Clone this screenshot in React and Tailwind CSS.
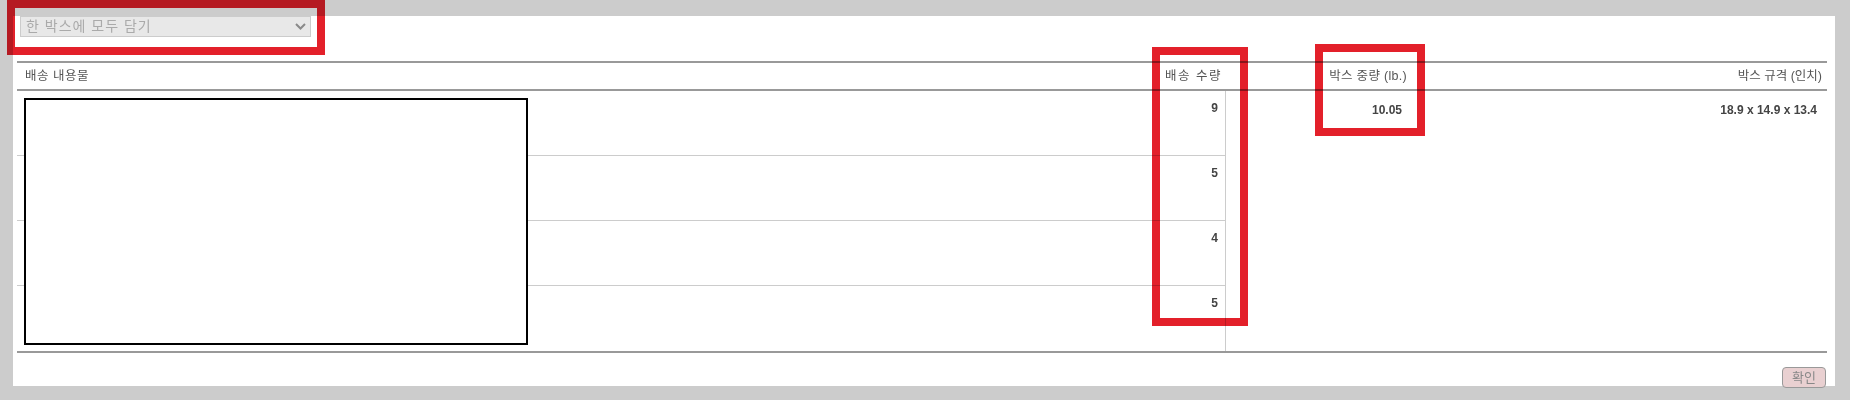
const rows = [9, 5, 4, 5]

const Chevron = () => (
  <svg width="11" height="7" viewBox="0 0 11 7" fill="none">
    <polyline points="1,1 5.5,5.5 10,1" stroke="#8a8a8a" strokeWidth="2" />
  </svg>
)

const Mark = ({ className }) => (
  <div className={`absolute border-[8px] border-[#e3202a] mix-blend-multiply pointer-events-none ${className}`} />
)

const App = () => {
  return (
    <div className="relative w-[1850px] h-[400px] overflow-hidden bg-[#cccccc] pt-[15px] pl-[13px] font-['Liberation_Sans','Noto_Sans_CJK_KR',sans-serif]">
      <div className="w-[1822px] h-[370px] bg-white">
        {/* select */}
        <div className="ml-[7px] mt-[1px] w-[291px] h-[21px] border border-[#cccccc] bg-[#e8e8e8] flex items-center justify-between pl-[5px] pr-[4px] text-[14px] text-[#aaaaaa]">
          <span className="tracking-[1px]">한 박스에 모두 담기</span>
          <Chevron />
        </div>

        {/* table */}
        <div className="ml-[4px] mt-[24px] w-[1810px] border-t-2 border-[#999999]">
          <div className="flex h-[28px] items-center pt-[1px] border-b-2 border-[#999999] text-[12.5px] text-[#555555] whitespace-nowrap">
            <div className="w-[1143px] shrink-0 pl-[8px] tracking-[0.5px]">배송 내용물</div>
            <div className="w-[65px] shrink-0 flex justify-end pr-[3px] tracking-[1.5px]">배송 수량</div>
            <div className="w-[187px] shrink-0 flex justify-end pr-[5px] tracking-[0.3px]">박스 중량 (lb.)</div>
            <div className="flex-1 flex justify-end pr-[5px]">박스 규격 (인치)</div>
          </div>

          <div className="flex border-b-2 border-[#999999]">
            <div className="relative w-[1209px] shrink-0 border-r border-[#cccccc]">
              {rows.map((n, i) => (
                <div
                  key={i}
                  className={`flex h-[65px] ${i < rows.length - 1 ? "border-b border-[#cccccc]" : ""}`}
                >
                  <div className="w-[1143px] shrink-0" />
                  <div className="w-[65px] shrink-0 pt-[8px] pr-[7px] text-right text-[12px] font-bold text-[#444444]">
                    {n}
                  </div>
                </div>
              ))}
              <div className="absolute left-[7px] top-[7px] w-[504px] h-[247px] border-2 border-black bg-white" />
            </div>
            <div className="w-[186px] shrink-0 pt-[10px] pr-[10px] text-right text-[12px] font-bold text-[#444444]">10.05</div>
            <div className="flex-1 pt-[10px] pr-[10px] text-right text-[12px] font-bold text-[#444444]">
              18.9 x 14.9 x 13.4
            </div>
          </div>
        </div>

        <div className="flex justify-end pr-[9px] mt-[14px]">
          <button className="w-[44px] h-[21px] rounded-[4px] border border-[#999999] bg-[#e9d0d1] text-[13px] leading-none text-[#888888]">
            확인
          </button>
        </div>
      </div>

      <Mark className="left-[7px] top-0 w-[318px] h-[55px]" />
      <Mark className="left-[1152px] top-[47px] w-[96px] h-[279px]" />
      <Mark className="left-[1315px] top-[44px] w-[110px] h-[92px]" />
    </div>
  )
}

export default App
